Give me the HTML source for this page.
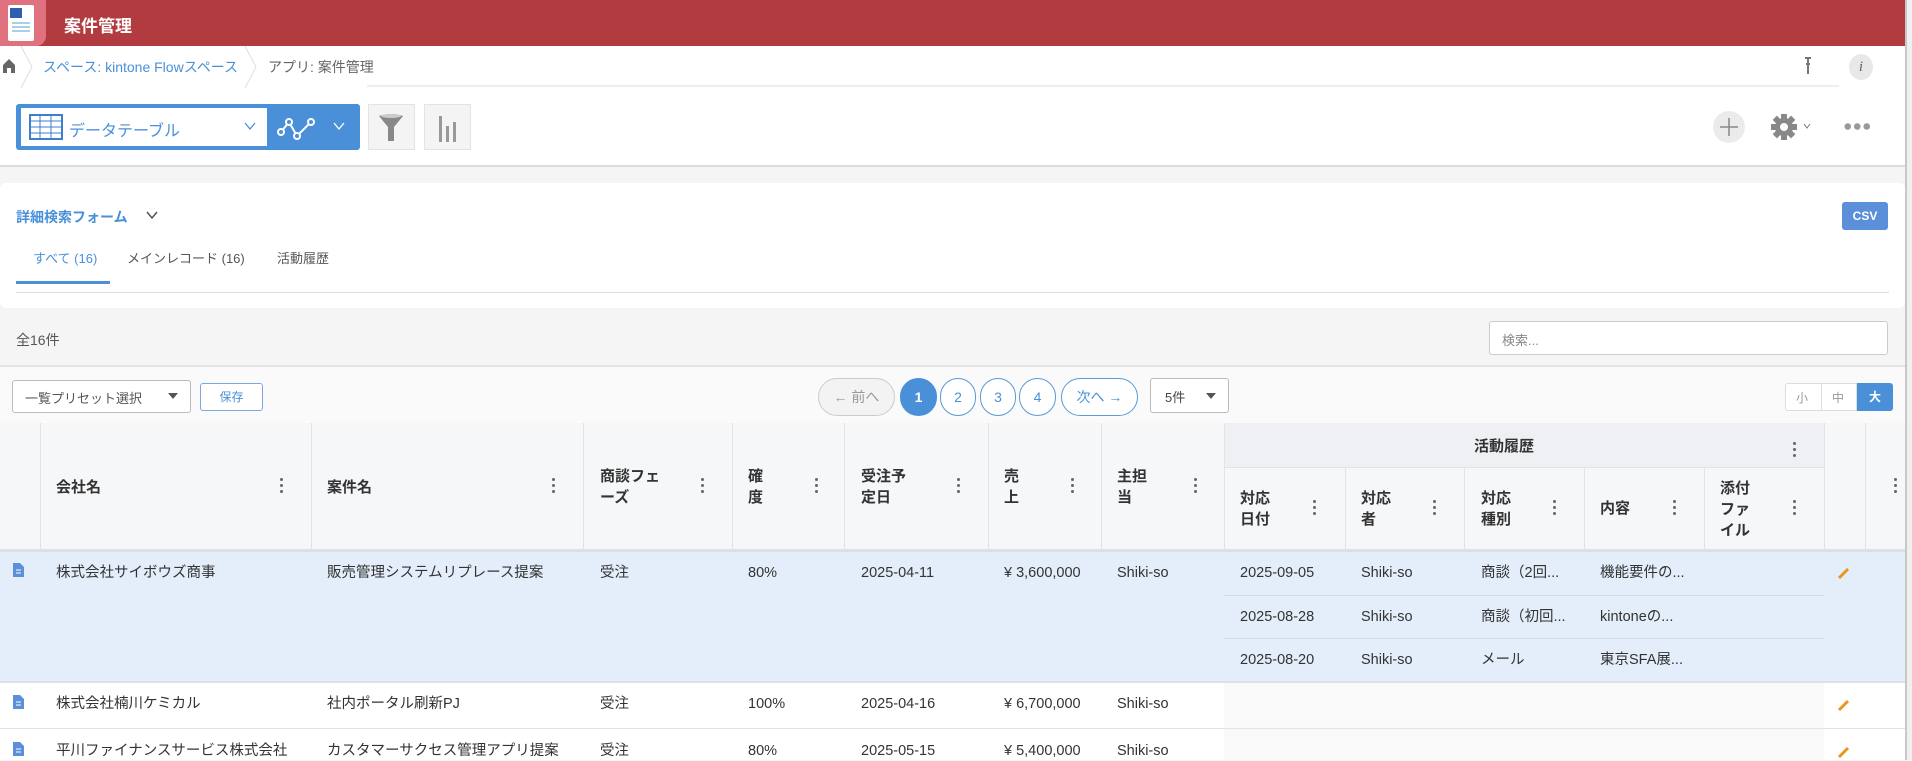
<!DOCTYPE html>
<html><head><meta charset="utf-8">
<style>
*{box-sizing:border-box;margin:0;padding:0}
body{width:1912px;height:760px;overflow:hidden;background:#f5f5f5;font-family:"Liberation Sans","Noto Sans CJK JP",sans-serif;font-size:15px;color:#333;position:relative}
.a{position:absolute}
.t{position:absolute;white-space:nowrap}
.hd{font-weight:bold;color:#333;line-height:21px}
.k{position:absolute;width:4px;height:16px}
.k i{display:block;width:3px;height:3px;border-radius:50%;background:#666;margin:0 0 3px 0}
.vl{position:absolute;width:1px;background:#e3e3e3}
.pg{position:absolute;top:378px;height:38px;border:1px solid #5b9bd5;border-radius:19px;color:#4a90d9;text-align:center;line-height:36px;font-size:14px;background:#fff}
.r{position:absolute;left:0;font-size:14.5px;color:#333;line-height:20px;height:20px}
.r span{position:absolute;top:0;line-height:20px;white-space:nowrap}
</style></head><body>
<!-- header -->
<div class="a" style="left:0;top:0;width:1905px;height:46px;background:#b13b3e"></div>
<div class="a" style="left:0;top:0;width:46px;height:46px;background:#e0717f;border-radius:0 0 10px 0"></div>
<div class="a" style="left:8px;top:5px;width:26px;height:36px;background:#fff;border-radius:2px"></div>
<div class="a" style="left:10px;top:8px;width:12px;height:10px;background:#2f5fb0"></div>
<div class="a" style="left:12px;top:22px;width:18px;height:12px;background:repeating-linear-gradient(#a8d0e6 0 2px,#fff 2px 4px)"></div>
<div class="t" style="left:64px;top:12px;color:#fff;font-weight:bold;font-size:17px">案件管理</div>
<div class="a" style="left:1905px;top:0;width:7px;height:760px;background:#f0f0f0;border-left:2px solid #c8c8c8"></div>
<!-- breadcrumb -->
<div class="a" style="left:0;top:46px;width:1905px;height:120px;background:#fff"></div>
<svg class="a" style="left:2px;top:58px" width="14" height="16" viewBox="0 0 14 16"><path d="M7 1 L1 7 V15 H5 V10 H9 V15 H13 V7 Z" fill="#666"/></svg>
<svg class="a" style="left:20px;top:46px" width="14" height="42"><path d="M1 0 L12 21 L1 42" stroke="#ddd" fill="none"/></svg>
<div class="t" style="left:43px;top:57px;color:#4a90d9;font-size:14px">スペース: kintone Flowスペース</div>
<svg class="a" style="left:244px;top:46px" width="14" height="42"><path d="M1 0 L12 21 L1 42" stroke="#ddd" fill="none"/></svg>
<div class="t" style="left:268px;top:57px;color:#666;font-size:14px">アプリ: 案件管理</div>
<div class="a" style="left:367px;top:85px;width:1472px;height:2px;background:#eee"></div>
<svg class="a" style="left:1803px;top:57px" width="10" height="18"><path d="M2 1H8M5 1V12M3 7H7M5 12V17" stroke="#777" stroke-width="2"/></svg>
<div class="a" style="left:1849px;top:54px;width:24px;height:26px;border-radius:50%;background:#e8e8e8;color:#666;font-style:italic;font-family:'Liberation Serif',serif;font-size:15px;text-align:center;line-height:26px">i</div>
<!-- toolbar -->
<div class="a" style="left:16px;top:104px;width:344px;height:46px;background:#4a90d9;border-radius:3px"></div>
<div class="a" style="left:21px;top:108px;width:246px;height:38px;background:#fff"></div>
<svg class="a" style="left:29px;top:114px" width="34" height="26"><rect x="1" y="1" width="32" height="24" fill="#fff" stroke="#3c7fcf" stroke-width="2"/><path d="M1 7H33M1 13H33M1 19H33M11 1V25M22 1V25" stroke="#3c7fcf" stroke-width="1"/></svg>
<div class="t" style="left:69px;top:117px;color:#4a90d9;font-size:16px">データテーブル</div>
<svg class="a" style="left:244px;top:122px" width="12" height="8"><path d="M1 1L6 7L11 1" stroke="#4a90d9" fill="none" stroke-width="1.3"/></svg>
<svg class="a" style="left:276px;top:114px" width="42" height="28"><path d="M5 18L13 8L21 22L35 8" stroke="#fff" stroke-width="2" fill="none"/><g fill="#4a90d9" stroke="#fff" stroke-width="2"><circle cx="5" cy="18" r="3"/><circle cx="13" cy="8" r="3"/><circle cx="21" cy="22" r="3"/><circle cx="35" cy="8" r="3"/></g></svg>
<svg class="a" style="left:333px;top:122px" width="12" height="8"><path d="M1 1L6 7L11 1" stroke="#fff" fill="none" stroke-width="1.3"/></svg>
<div class="a" style="left:368px;top:104px;width:47px;height:46px;background:#f4f4f4;border:1px solid #e3e3e3"></div>
<svg class="a" style="left:378px;top:113px" width="26" height="30"><path d="M1 3 Q13 -1 25 3 L16 14 V28 H10 V14 Z" fill="#888"/><ellipse cx="13" cy="3" rx="10" ry="2" fill="#ccc"/></svg>
<div class="a" style="left:424px;top:104px;width:47px;height:46px;background:#f4f4f4;border:1px solid #e3e3e3"></div>
<svg class="a" style="left:438px;top:114px" width="20" height="28"><rect x="1" y="2" width="3" height="26" fill="#999"/><rect x="8" y="12" width="3" height="16" fill="#999"/><rect x="15" y="8" width="3" height="20" fill="#999"/></svg>
<div class="a" style="left:1713px;top:111px;width:32px;height:32px;border-radius:50%;background:#ebebeb"></div>
<svg class="a" style="left:1719px;top:117px" width="20" height="20"><path d="M10 1V19M1 10H19" stroke="#888" stroke-width="1.5"/></svg>
<svg class="a" style="left:1771px;top:114px" width="26" height="26" viewBox="0 0 26 26"><g fill="#888"><circle cx="13" cy="13" r="9"/><rect x="10" y="0" width="6" height="26"/><rect x="0" y="10" width="26" height="6"/><rect x="10" y="0" width="6" height="26" transform="rotate(45 13 13)"/><rect x="10" y="0" width="6" height="26" transform="rotate(-45 13 13)"/></g><circle cx="13" cy="13" r="4" fill="#fff"/></svg>
<svg class="a" style="left:1803px;top:123px" width="8" height="6"><path d="M1 1L4 5L7 1" stroke="#777" fill="none"/></svg>
<div class="a" style="left:1843px;top:123px;width:28px;height:7px;background:radial-gradient(circle,#999 3px,transparent 3.5px) 0 0/9.5px 7px repeat-x"></div>
<div class="a" style="left:0;top:165px;width:1905px;height:2px;background:#ddd"></div>
<!-- card -->
<div class="a" style="left:0;top:183px;width:1905px;height:125px;background:#fff;border-radius:6px"></div>
<div class="t" style="left:16px;top:207px;color:#4a90d9;font-weight:bold;font-size:14px">詳細検索フォーム</div>
<svg class="a" style="left:146px;top:211px" width="12" height="8"><path d="M1 1L6 7L11 1" stroke="#555" fill="none" stroke-width="1.5"/></svg>
<div class="a" style="left:1842px;top:202px;width:46px;height:28px;background:#5b8fd9;border-radius:3px;color:#fff;font-size:12px;font-weight:bold;text-align:center;line-height:28px">CSV</div>
<div class="t" style="left:33px;top:248px;color:#4a90d9;font-size:13px">すべて (16)</div>
<div class="t" style="left:127px;top:248px;color:#555;font-size:13px">メインレコード (16)</div>
<div class="t" style="left:277px;top:248px;color:#555;font-size:13px">活動履歴</div>
<div class="a" style="left:16px;top:281px;width:94px;height:3px;background:#4a90d9"></div>
<div class="a" style="left:16px;top:292px;width:1873px;height:1px;background:#ddd"></div>
<!-- count -->
<div class="t" style="left:16px;top:330px;color:#555;font-size:14px">全16件</div>
<div class="a" style="left:1489px;top:321px;width:399px;height:34px;background:#fff;border:1px solid #ccc;border-radius:3px"></div>
<div class="t" style="left:1502px;top:330px;color:#888;font-size:13px">検索...</div>
<div class="a" style="left:0;top:365px;width:1905px;height:2px;background:#e3e3e3"></div>
<div class="a" style="left:0;top:367px;width:1905px;height:56px;background:#fafafa"></div>
<div class="a" style="left:12px;top:380px;width:179px;height:33px;background:#fff;border:1px solid #bbb;border-radius:3px"></div>
<div class="t" style="left:25px;top:388px;color:#555;font-size:13px">一覧プリセット選択</div>
<svg class="a" style="left:168px;top:393px" width="10" height="6"><path d="M0 0H10L5 6Z" fill="#555"/></svg>
<div class="a" style="left:200px;top:383px;width:63px;height:28px;background:#fff;border:1px solid #7aa9e0;border-radius:3px;color:#4a90d9;font-size:12px;text-align:center;line-height:26px">保存</div>
<div class="pg" style="left:818px;width:77px;border-color:#ccc;color:#999;background:#f3f3f3">← 前へ</div>
<div class="pg" style="left:900px;width:37px;background:#4a90d9;color:#fff;font-weight:bold;border-color:#4a90d9">1</div>
<div class="pg" style="left:940px;width:36px">2</div>
<div class="pg" style="left:980px;width:36px">3</div>
<div class="pg" style="left:1019px;width:37px">4</div>
<div class="pg" style="left:1061px;width:77px">次へ →</div>
<div class="a" style="left:1150px;top:378px;width:79px;height:35px;background:#fff;border:1px solid #bbb;border-radius:3px"></div>
<div class="t" style="left:1165px;top:387px;color:#444;font-size:13px">5件</div>
<svg class="a" style="left:1206px;top:393px" width="10" height="6"><path d="M0 0H10L5 6Z" fill="#555"/></svg>
<div class="a" style="left:1785px;top:383px;width:72px;height:28px;background:#fff;border:1px solid #ddd;border-radius:3px 0 0 3px"></div>
<div class="t" style="left:1796px;top:389px;color:#999;font-size:12px">小</div>
<div class="a" style="left:1821px;top:383px;width:1px;height:28px;background:#ddd"></div>
<div class="t" style="left:1832px;top:389px;color:#999;font-size:12px">中</div>
<div class="a" style="left:1857px;top:383px;width:36px;height:28px;background:#4a90d9;border-radius:0 3px 3px 0;color:#fff;font-size:12px;font-weight:bold;text-align:center;line-height:28px">大</div>
<!-- table header -->
<div class="a" style="left:0;top:423px;width:1905px;height:128px;background:#f6f7f9"></div>
<div class="a" style="left:1224px;top:423px;width:600px;height:44px;background:#eef0f3"></div>
<div class="a" style="left:1224px;top:467px;width:600px;height:1px;background:#e3e3e3"></div>
<div class="a" style="left:0;top:549px;width:1905px;height:3px;background:#dcdfe3"></div>
<div class="vl" style="left:40px;top:423px;height:128px"></div>
<div class="vl" style="left:311px;top:423px;height:128px"></div>
<div class="vl" style="left:583px;top:423px;height:128px"></div>
<div class="vl" style="left:732px;top:423px;height:128px"></div>
<div class="vl" style="left:844px;top:423px;height:128px"></div>
<div class="vl" style="left:988px;top:423px;height:128px"></div>
<div class="vl" style="left:1101px;top:423px;height:128px"></div>
<div class="vl" style="left:1224px;top:423px;height:128px"></div>
<div class="vl" style="left:1345px;top:467px;height:84px"></div>
<div class="vl" style="left:1464px;top:467px;height:84px"></div>
<div class="vl" style="left:1584px;top:467px;height:84px"></div>
<div class="vl" style="left:1704px;top:467px;height:84px"></div>
<div class="vl" style="left:1824px;top:423px;height:128px"></div>
<div class="vl" style="left:1865px;top:423px;height:128px"></div>
<div class="t hd" style="left:56px;top:477px">会社名</div>
<div class="t hd" style="left:327px;top:477px">案件名</div>
<div class="t hd" style="left:600px;top:466px">商談フェ<br>ーズ</div>
<div class="t hd" style="left:748px;top:466px">確<br>度</div>
<div class="t hd" style="left:861px;top:466px">受注予<br>定日</div>
<div class="t hd" style="left:1004px;top:466px">売<br>上</div>
<div class="t hd" style="left:1117px;top:466px">主担<br>当</div>
<div class="t hd" style="left:1474px;top:436px">活動履歴</div>
<div class="t hd" style="left:1240px;top:488px">対応<br>日付</div>
<div class="t hd" style="left:1361px;top:488px">対応<br>者</div>
<div class="t hd" style="left:1481px;top:488px">対応<br>種別</div>
<div class="t hd" style="left:1600px;top:498px">内容</div>
<div class="t hd" style="left:1720px;top:478px">添付<br>ファ<br>イル</div>
<div class="k" style="left:280px;top:478px"><i></i><i></i><i></i></div>
<div class="k" style="left:552px;top:478px"><i></i><i></i><i></i></div>
<div class="k" style="left:701px;top:478px"><i></i><i></i><i></i></div>
<div class="k" style="left:815px;top:478px"><i></i><i></i><i></i></div>
<div class="k" style="left:957px;top:478px"><i></i><i></i><i></i></div>
<div class="k" style="left:1071px;top:478px"><i></i><i></i><i></i></div>
<div class="k" style="left:1194px;top:478px"><i></i><i></i><i></i></div>
<div class="k" style="left:1313px;top:500px"><i></i><i></i><i></i></div>
<div class="k" style="left:1433px;top:500px"><i></i><i></i><i></i></div>
<div class="k" style="left:1553px;top:500px"><i></i><i></i><i></i></div>
<div class="k" style="left:1673px;top:500px"><i></i><i></i><i></i></div>
<div class="k" style="left:1793px;top:500px"><i></i><i></i><i></i></div>
<div class="k" style="left:1793px;top:442px"><i></i><i></i><i></i></div>
<div class="k" style="left:1894px;top:478px"><i></i><i></i><i></i></div>
<!-- rows -->
<div class="a" style="left:0;top:552px;width:1905px;height:130px;background:#e3eefa"></div>
<div class="a" style="left:1224px;top:595px;width:600px;height:1px;background:#d3dde8"></div>
<div class="a" style="left:1224px;top:638px;width:600px;height:1px;background:#d3dde8"></div>
<div class="a" style="left:0;top:681px;width:1905px;height:2px;background:#dde1e5"></div>
<div class="a" style="left:0;top:683px;width:1905px;height:77px;background:#fff"></div>
<div class="a" style="left:1224px;top:683px;width:600px;height:77px;background:#f9f9f9"></div>
<div class="a" style="left:0;top:728px;width:1905px;height:1px;background:#e3e3e3"></div>
<svg class="a" style="left:13px;top:563px" width="11" height="14"><path d="M0 0H7L11 4V14H0Z" fill="#5b8fd9"/><path d="M3 7H8M3 10H8" stroke="#fff"/></svg>
<svg class="a" style="left:13px;top:695px" width="11" height="14"><path d="M0 0H7L11 4V14H0Z" fill="#5b8fd9"/><path d="M3 7H8M3 10H8" stroke="#fff"/></svg>
<svg class="a" style="left:13px;top:742px" width="11" height="14"><path d="M0 0H7L11 4V14H0Z" fill="#5b8fd9"/><path d="M3 7H8M3 10H8" stroke="#fff"/></svg>
<div class="r" style="top:563px">
<span style="left:56px">株式会社サイボウズ商事</span><span style="left:327px">販売管理システムリプレース提案</span><span style="left:600px">受注</span><span style="left:748px">80%</span><span style="left:861px">2025-04-11</span><span style="left:1004px">¥ 3,600,000</span><span style="left:1117px">Shiki-so</span>
<span style="left:1240px">2025-09-05</span><span style="left:1361px">Shiki-so</span><span style="left:1481px">商談（2回...</span><span style="left:1600px">機能要件の...</span>
</div>
<div class="r" style="top:607px">
<span style="left:1240px">2025-08-28</span><span style="left:1361px">Shiki-so</span><span style="left:1481px">商談（初回...</span><span style="left:1600px">kintoneの...</span></div>
<div class="r" style="top:650px">
<span style="left:1240px">2025-08-20</span><span style="left:1361px">Shiki-so</span><span style="left:1481px">メール</span><span style="left:1600px">東京SFA展...</span></div>
<div class="r" style="top:694px">
<span style="left:56px">株式会社楠川ケミカル</span><span style="left:327px">社内ポータル刷新PJ</span><span style="left:600px">受注</span><span style="left:748px">100%</span><span style="left:861px">2025-04-16</span><span style="left:1004px">¥ 6,700,000</span><span style="left:1117px">Shiki-so</span></div>
<div class="r" style="top:741px">
<span style="left:56px">平川ファイナンスサービス株式会社</span><span style="left:327px">カスタマーサクセス管理アプリ提案</span><span style="left:600px">受注</span><span style="left:748px">80%</span><span style="left:861px">2025-05-15</span><span style="left:1004px">¥ 5,400,000</span><span style="left:1117px">Shiki-so</span></div>
<svg class="a" style="left:1837px;top:566px" width="14" height="14"><path d="M2 12L11 3" stroke="#e8961e" stroke-width="3"/></svg>
<svg class="a" style="left:1837px;top:698px" width="14" height="14"><path d="M2 12L11 3" stroke="#e8961e" stroke-width="3"/></svg>
<svg class="a" style="left:1837px;top:745px" width="14" height="14"><path d="M2 12L11 3" stroke="#e8961e" stroke-width="3"/></svg>
</body></html>
